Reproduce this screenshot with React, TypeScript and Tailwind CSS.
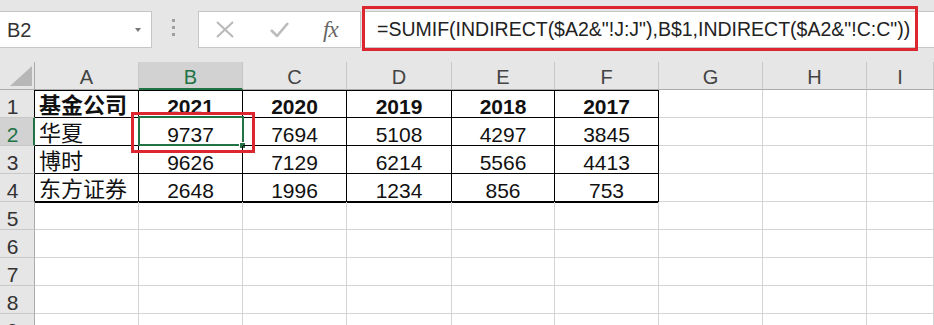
const cols = ["A", "B", "C", "D", "E", "F", "G", "H", "I"];

const data = [
  ["基金公司", "2021", "2020", "2019", "2018", "2017"],
  ["华夏", "9737", "7694", "5108", "4297", "3845"],
  ["博时", "9626", "7129", "6214", "5566", "4413"],
  ["东方证券", "2648", "1996", "1234", "856", "753"],
];

const font = "font-['Liberation_Sans','Noto_Sans_CJK_SC',sans-serif]";

function Toolbar() {
  return (
    <div className="h-[62px] bg-[#e6e6e6] flex items-start pt-[11px]">
      {/* name box */}
      <div className="w-[152px] h-[37px] bg-white border border-l-0 border-[#c6c6c6] flex items-center justify-between pl-[7px] pr-[10px]">
        <span className="text-[20px] text-[#333] leading-none">B2</span>
        <span className="w-0 h-0 border-l-[3px] border-r-[3px] border-t-[4px] border-l-transparent border-r-transparent border-t-[#777]" />
      </div>
      {/* splitter dots */}
      <div className="ml-[20px] mt-[8px] flex flex-col gap-[4px]">
        <span className="w-[3px] h-[3px] bg-[#a0a0a0]" />
        <span className="w-[3px] h-[3px] bg-[#a0a0a0]" />
        <span className="w-[3px] h-[3px] bg-[#a0a0a0]" />
      </div>
      {/* cancel / enter / fx */}
      <div className="ml-[23px] w-[163px] h-[37px] bg-white border border-[#c6c6c6] flex items-center">
        <svg className="ml-[17px]" width="18" height="17" viewBox="0 0 18 17">
          <path d="M1 1 L17 16 M17 1 L1 16" stroke="#b8b8b8" strokeWidth="2" fill="none" />
        </svg>
        <svg className="ml-[36px]" width="19" height="15" viewBox="0 0 19 15">
          <path d="M1 8 L7 14 L18 1" stroke="#bcbcbc" strokeWidth="2.6" fill="none" />
        </svg>
        <span className="ml-[34px] font-['Liberation_Serif',serif] italic text-[23px] leading-none text-[#666] tracking-[-1px]">
          fx
        </span>
      </div>
      {/* formula text */}
      <div className="ml-px flex-1 h-[37px] bg-white border border-r-0 border-[#c6c6c6] flex items-center pl-[14px]">
        <span className="text-[19.5px] leading-none text-[#222] whitespace-nowrap">
          =SUMIF(INDIRECT($A2&amp;"!J:J"),B$1,INDIRECT($A2&amp;"!C:C"))
        </span>
      </div>
    </div>
  );
}

function Sheet() {
  const rows = Array.from({ length: 9 }, (_, i) => i + 1);
  return (
    <div className="grid grid-cols-[35px_104px_104px_104px_105px_103px_104px_104px_104px_1fr] auto-rows-[28px]">
      {/* header row */}
      <div className="bg-[#e6e6e6] border-r border-b border-[#ababab] relative">
        <svg className="absolute left-[10px] top-[4px]" width="23" height="21" viewBox="0 0 23 21">
          <polygon points="22,0 22,20 0,20" fill="#b7b7b7" />
        </svg>
      </div>
      {cols.map((c) => {
        const sel = c === "B";
        return (
          <div
            key={c}
            className={
              sel
                ? "bg-[#d2d2d2] border-r border-[#c4c4c4] border-b-2 border-b-[#217346] flex items-end justify-center pb-[1px] text-[20px] leading-none text-[#217346]"
                : "bg-[#e6e6e6] border-r border-[#c8c8c8] border-b border-b-[#ababab] flex items-end justify-center pb-[2px] text-[20px] leading-none text-[#444]"
            }
          >
            {c}
          </div>
        );
      })}
      {rows.map((r) => {
        const row = data[r - 1];
        const selRow = r === 2;
        const inTable = !!row;
        return [
          <div
            key={`h${r}`}
            className={
              selRow
                ? "bg-[#d2d2d2] border-b border-[#c8c8c8] border-r-2 border-r-[#217346] flex items-end justify-center pr-[8px] text-[21px] leading-none text-[#217346]"
                : inTable
                ? "bg-[#e6e6e6] border-b border-[#c8c8c8] border-r border-r-black flex items-end justify-center pr-[9px] text-[21px] leading-none text-[#333]"
                : "bg-[#e6e6e6] border-b border-[#c8c8c8] border-r border-r-[#ababab] flex items-end justify-center pr-[9px] text-[21px] leading-none text-[#333]"
            }
          >
            {r}
          </div>,
          ...cols.map((c, ci) => {
            const tableCell = inTable && ci < 6;
            const val = tableCell ? row[ci] : "";
            const isName = ci === 0;
            const bold = r === 1;
            const border = tableCell
              ? "border-r border-b border-black"
              : r === 5 && ci < 6
              ? "border-r border-b border-[#d4d4d4] shadow-[inset_0_1px_0_#000]"
              : "border-r border-b border-[#d4d4d4]";
            const top = tableCell && r === 1 ? " shadow-[inset_0_1px_0_#000]" : "";
            const align = isName ? " justify-start pl-[4px] text-[22px]" : " justify-center text-[21px]";
            return (
              <div
                key={`${c}${r}`}
                className={`relative flex items-end leading-none text-[#111] ${border}${top}${align}${bold ? " font-bold" : ""}`}
              >
                {val}
                {c === "B" && r === 2 && (
                  <>
                    <div className="absolute -left-px -top-[2px] -right-[2px] -bottom-px border-2 border-[#217346]" />
                    <div className="absolute -right-[4px] -bottom-[4px] w-[7px] h-[7px] bg-[#217346] border border-white" />
                  </>
                )}
              </div>
            );
          }),
        ];
      })}
    </div>
  );
}

export default function App() {
  return (
    <div className={`relative w-[934px] h-[325px] overflow-hidden bg-white ${font}`}>
      <Toolbar />
      <Sheet />
      {/* annotation boxes */}
      <div className="absolute left-[362px] top-[6px] w-[556px] h-[45px] border-[3px] border-[#dc2630]" />
      <div className="absolute left-[131px] top-[112px] w-[124px] h-[41px] border-[3px] border-[#dc2630]" />
    </div>
  );
}
